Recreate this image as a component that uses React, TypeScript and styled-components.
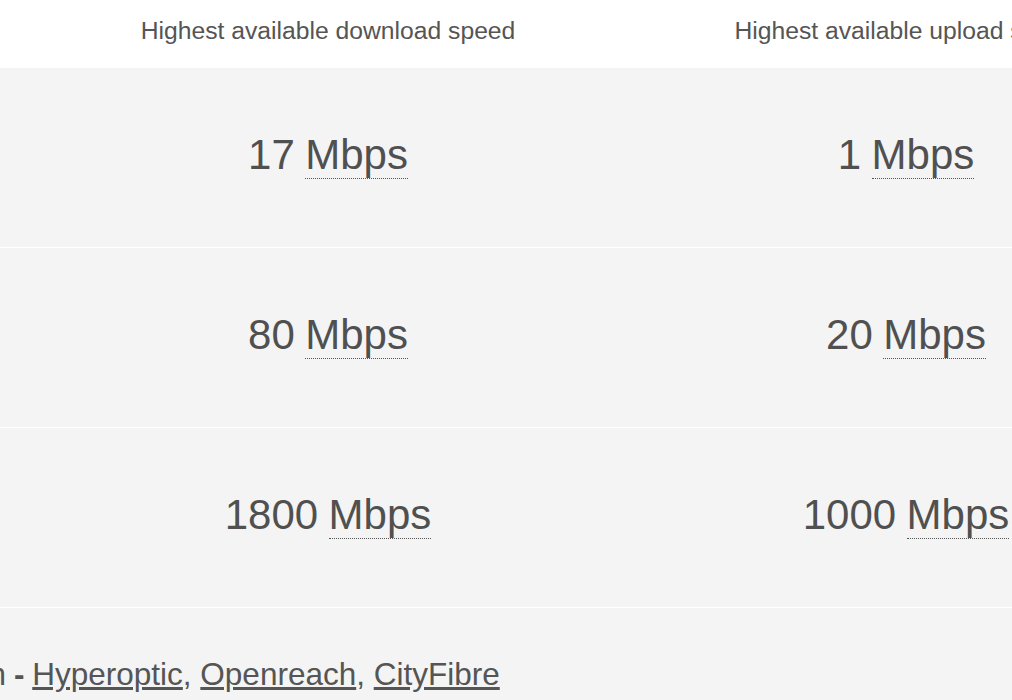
import React, { FC } from 'react';
import styled, { createGlobalStyle } from 'styled-components';

interface Speed {
  down: number;
  up: number;
}

const speeds: Speed[] = [
  { down: 17, up: 1 },
  { down: 80, up: 20 },
  { down: 1800, up: 1000 },
];

const providers = ['Hyperoptic', 'Openreach', 'CityFibre'];

const GlobalStyle = createGlobalStyle`
  html, body {
    margin: 0;
    padding: 0;
    background: #fff;
    overflow: hidden;
  }
  body {
    font-family: "Liberation Sans", Arial, sans-serif;
    color: #555;
  }
`;

const Page = styled.div`
  width: 1012px;
  height: 700px;
  overflow: hidden;
`;

const Table = styled.div`
  display: grid;
  grid-template-columns: 39px 578px 578px;
  width: 1195px;
`;

const HeadCell = styled.div`
  height: 67px;
  padding-bottom: 5px;
  box-sizing: border-box;
  display: flex;
  align-items: center;
  justify-content: center;
  font-size: 24.7px;
  color: #555;
  white-space: nowrap;
  background: #fff;
`;

const Cell = styled.div`
  height: 180px;
  padding-bottom: 5px;
  box-sizing: border-box;
  border-top: 1px solid #fff;
  background: #f4f4f4;
  display: flex;
  align-items: center;
  justify-content: center;
  font-size: 42px;
  color: #505050;
  white-space: nowrap;
`;

const Unit = styled.abbr`
  text-decoration: none;
  border-bottom: 1px dotted #555;
  margin-left: 0.25em;
`;

const Footer = styled.div`
  grid-column: 1 / -1;
  height: 100px;
  border-top: 1px solid #fff;
  background: #f4f4f4;
  display: flex;
  align-items: flex-start;
  padding-top: 48px;
  box-sizing: border-box;
  font-size: 31.5px;
  color: #555;
  white-space: nowrap;
`;

const Label = styled.span`
  display: flex;
  justify-content: flex-end;
  width: 6px;
  overflow: hidden;
`;

const Dash = styled.b`
  margin: 0 0.25em;
`;

const Links = styled.span`
  white-space: pre;
`;

const Link = styled.a`
  color: #555;
  text-decoration: underline;
  text-underline-offset: 2px;
`;

const SpeedValue: FC<{ value: number }> = ({ value }) => (
  <span>
    {value}
    <Unit title="Megabits per second">Mbps</Unit>
  </span>
);

export default function App() {
  return (
    <Page>
      <GlobalStyle />
      <Table>
        <HeadCell />
        <HeadCell>Highest available download speed</HeadCell>
        <HeadCell>Highest available upload speed</HeadCell>
        {speeds.map((s) => (
          <React.Fragment key={s.down}>
            <Cell />
            <Cell>
              <SpeedValue value={s.down} />
            </Cell>
            <Cell>
              <SpeedValue value={s.up} />
            </Cell>
          </React.Fragment>
        ))}
        <Footer>
          <Label>Full fibre available in your location</Label>
          <Dash>-</Dash>
          <Links>
            {providers.map((p, i) => (
              <React.Fragment key={p}>
                <Link href="#">{p}</Link>
                {i < providers.length - 1 && ', '}
              </React.Fragment>
            ))}
          </Links>
        </Footer>
      </Table>
    </Page>
  );
}
